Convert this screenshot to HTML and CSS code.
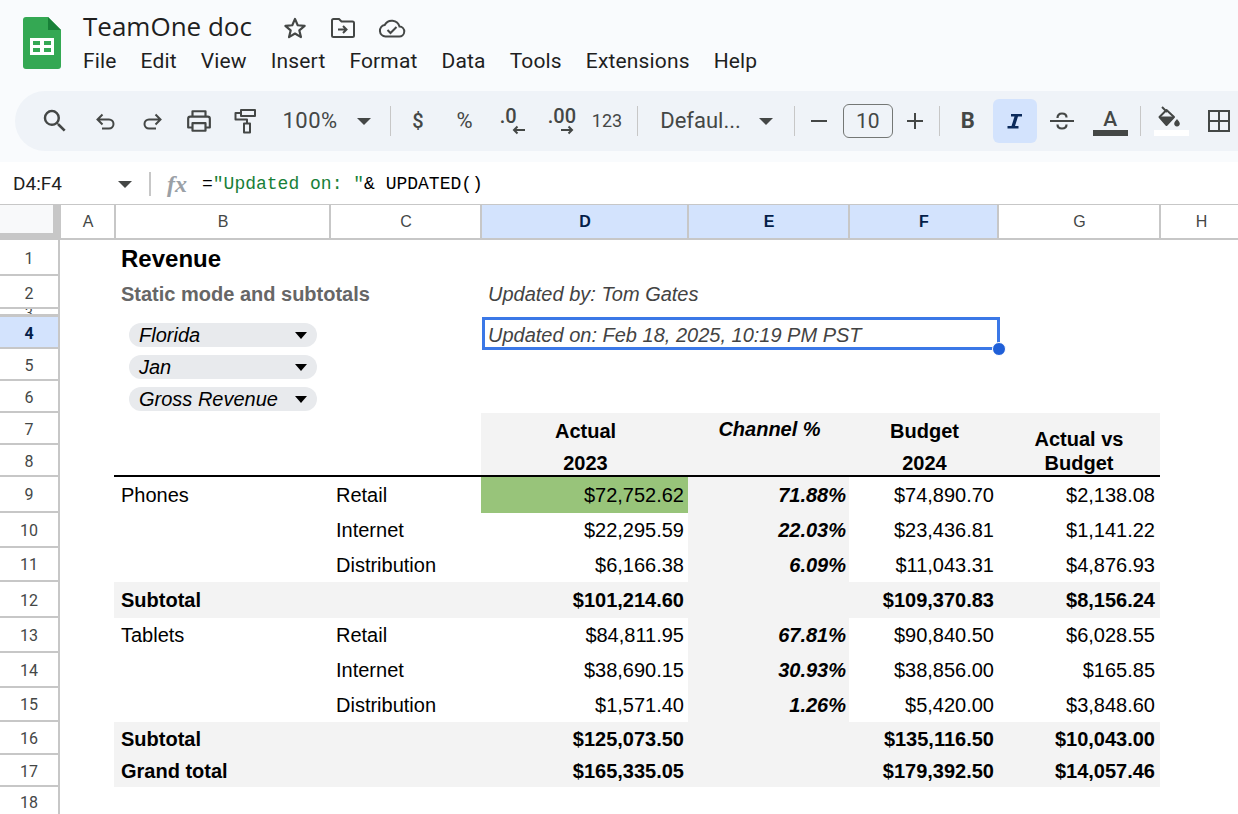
FILE: index.html
```html
<!DOCTYPE html>
<html lang="en">
<head>
<meta charset="utf-8">
<title>TeamOne doc</title>
<link rel="stylesheet" href="styles.css">
</head>
<body>
<header class="app-header">
  <svg class="logo" viewBox="0 0 38 52" width="38" height="52">
    <path d="M3 0H25L38 13V49a3 3 0 0 1-3 3H3a3 3 0 0 1-3-3V3a3 3 0 0 1 3-3z" fill="#34a853"/>
    <path d="M25 0L38 13H25z" fill="#188038"/>
    <path d="M7 21H31V38H7zM10 24V28H17V24zM21 24V28H28V24zM10 31V35H17V31zM21 31V35H28V31z" fill="#fff" fill-rule="evenodd"/>
  </svg>
  <div class="title-block">
    <div class="title-row">
      <span class="doc-title">TeamOne doc</span>
      <svg class="title-icon star" viewBox="0 0 24 24" width="26" height="26"><path d="M12 3.600l2.500 5.900 6.400.5-4.900 4.200 1.500 6.200L12 17.100l-5.500 3.300L8 14.200 3.100 10l6.400-.5z" fill="none" stroke="#444746" stroke-width="2" stroke-linejoin="round"/></svg>
      <svg class="title-icon move" viewBox="0 0 26 22" width="26" height="22"><path d="M2 3.500a1.500 1.500 0 0 1 1.500-1.500H9l2.500 2.500h11a1.500 1.500 0 0 1 1.500 1.500v12.500a1.500 1.500 0 0 1-1.500 1.500h-19A1.500 1.500 0 0 1 2 18.500z" fill="none" stroke="#444746" stroke-width="2"/><path d="M8 12.500h8M13 9l3.500 3.500L13 16" fill="none" stroke="#444746" stroke-width="2"/></svg>
      <svg class="title-icon cloud" viewBox="0 0 28 20" width="28" height="20"><path d="M7.500 18.500a5.800 5.800 0 0 1-.8-11.500A8 8 0 0 1 21.500 8.500a5 5 0 0 1-.5 10z" fill="none" stroke="#444746" stroke-width="2"/><path d="M9.500 12l3 3 6-6" fill="none" stroke="#444746" stroke-width="2"/></svg>
    </div>
    <nav class="menu">
      <span>File</span><span>Edit</span><span>View</span><span>Insert</span><span>Format</span><span>Data</span><span>Tools</span><span>Extensions</span><span>Help</span>
    </nav>
  </div>
</header>

<div class="toolbar">
  <span class="tool search"><svg viewBox="0 0 24 24" width="30" height="30"><path fill="#444746" d="M15.500 14h-.79l-.28-.27A6.471 6.471 0 0 0 16 9.500 6.500 6.500 0 1 0 9.500 16c1.610 0 3.090-.59 4.230-1.570l.27.28v.79l5 4.990L20.490 19l-4.990-5zm-6 0C7.010 14 5 11.990 5 9.500S7.010 5 9.500 5 14 7.010 14 9.500 11.990 14 9.500 14z"/></svg></span>
  <span class="tool low"><svg viewBox="0 0 20 20" width="20" height="20"><path d="M2 8.500h11a4.500 4.500 0 0 1 0 9H6M6.500 3.500L1.500 8.500l5 5" transform="translate(0 -1)" fill="none" stroke="#444746" stroke-width="2"/></svg></span>
  <span class="tool low"><svg viewBox="0 0 20 20" width="20" height="20"><path d="M18 8.500H7a4.500 4.500 0 0 0 0 9h7M13.500 3.500l5 5-5 5" transform="translate(0 -1)" fill="none" stroke="#444746" stroke-width="2"/></svg></span>
  <span class="tool"><svg viewBox="0 0 24 22" width="26" height="24"><path d="M6 7V2h12v5M6 17H2V9a2 2 0 0 1 2-2h16a2 2 0 0 1 2 2v8h-4M6 13h12v7H6z" fill="none" stroke="#444746" stroke-width="2" stroke-linejoin="round"/></svg></span>
  <span class="tool"><svg viewBox="0 0 22 26" width="22" height="26"><path d="M7 2h14v6H7zM7 5H1.500v6.500H13V15.500M10 15.500h6v9h-6z" fill="none" stroke="#444746" stroke-width="2" stroke-linejoin="round"/></svg></span>
  <span class="tool-text zoom-level">100%</span>
  <span class="caret"></span>
  <span class="sep sep-a"></span>
  <span class="tool sym dollar">$</span>
  <span class="tool sym percent">%</span>
  <span class="tool dec">
    <span class="dec-text">.0</span>
    <svg class="dec-arrow" viewBox="0 0 14 10" width="14" height="10"><path d="M13 5H2M5.500 1.500L2 5l3.500 3.500" fill="none" stroke="#444746" stroke-width="2"/></svg>
  </span>
  <span class="tool dec">
    <span class="dec-text">.00</span>
    <svg class="dec-arrow" viewBox="0 0 14 10" width="14" height="10"><path d="M1 5h11M8.500 1.500L12 5l-3.500 3.500" fill="none" stroke="#444746" stroke-width="2"/></svg>
  </span>
  <span class="tool sym num">123</span>
  <span class="sep sep-b"></span>
  <span class="tool-text font-name">Defaul...</span>
  <span class="caret caret-font"></span>
  <span class="sep sep-c"></span>
  <span class="tool minus"><svg viewBox="0 0 16 16" width="16" height="16"><path d="M0 8h16" stroke="#444746" stroke-width="2"/></svg></span>
  <span class="size-box">10</span>
  <span class="tool"><svg viewBox="0 0 16 16" width="16" height="16"><path d="M0 8h16M8 0v16" stroke="#444746" stroke-width="2"/></svg></span>
  <span class="sep sep-d"></span>
  <span class="tool sym bold">B</span>
  <span class="tool italic-on"><svg viewBox="0 0 18 18" width="18" height="18"><path d="M5 2h11v2.500h-4L9 14h3.500v2.500H1.500V14h4L8.500 4.500H5z" fill="#0b2a5b"/></svg></span>
  <span class="tool strike"><svg viewBox="0 0 26 22" width="26" height="22"><path d="M1 11h24" stroke="#444746" stroke-width="2"/><path d="M8.500 8c0-3 1.800-4.500 4.500-4.500S17.500 5 17.500 7.500M8.500 14.500c0 2.500 1.800 4 4.500 4s4.500-1.500 4.500-4" fill="none" stroke="#444746" stroke-width="2.200"/></svg></span>
  <span class="tool text-color"><span class="a-glyph">A</span><span class="bar bar-dark"></span></span>
  <span class="sep sep-e"></span>
  <span class="tool fill-color"><svg viewBox="0 0 28 22" width="28" height="22"><path d="M2.500 11L9.500 4l7.500 7-7.500 8z" fill="none" stroke="#444746" stroke-width="2" stroke-linejoin="round"/><path d="M2.500 11H17l-7.500 8z" fill="#444746" stroke="#444746" stroke-linejoin="round"/><path d="M5 1l5 5" stroke="#444746" stroke-width="2"/><path d="M20 13c1.200 1.800 2.800 3 2.800 4.600a2.800 2.800 0 0 1-5.600 0c0-1.600 1.600-2.800 2.800-4.600z" fill="#444746"/></svg><span class="bar bar-light"></span></span>
  <span class="tool borders"><svg viewBox="0 0 22 22" width="22" height="22"><path d="M1 1h20v20H1zM11 1v20M1 11h20" fill="none" stroke="#444746" stroke-width="2"/></svg></span>
</div>

<div class="formula-bar">
  <span class="name-box">D4:F4</span>
  <span class="caret caret-name"></span>
  <span class="fb-sep"></span>
  <span class="fx">fx</span>
  <span class="formula">=<span class="str">"Updated on: "</span>&amp; UPDATED()</span>
</div>

<table class="sheet">
  <colgroup>
    <col class="c-h"><col class="c-a"><col class="c-b"><col class="c-c"><col class="c-d"><col class="c-e"><col class="c-f"><col class="c-g"><col class="c-x">
  </colgroup>
  <tr class="hdr">
    <th class="corner"></th><th>A</th><th>B</th><th>C</th><th class="sel">D</th><th class="sel">E</th><th class="sel">F</th><th>G</th><th class="col-h">H</th>
  </tr>
  <tr class="r1"><th class="rh">1</th><td></td><td class="title" colspan="2">Revenue</td><td colspan="5"></td></tr>
  <tr class="r2"><th class="rh">2</th><td></td><td class="sub" colspan="2">Static mode and subtotals</td><td class="note" colspan="5">Updated by: Tom Gates</td></tr>
  <tr class="r3"><th class="rh thin"><span class="clip">3</span></th><td colspan="8"></td></tr>
  <tr class="r4"><th class="rh rsel">4</th><td></td><td><span class="chip">Florida</span></td><td></td>
    <td class="note rel" colspan="3">Updated on: Feb 18, 2025, 10:19 PM PST<span class="selection"><i class="handle"></i></span></td><td colspan="2"></td></tr>
  <tr class="r5"><th class="rh">5</th><td></td><td><span class="chip">Jan</span></td><td colspan="6"></td></tr>
  <tr class="r6"><th class="rh">6</th><td></td><td><span class="chip">Gross Revenue</span></td><td colspan="6"></td></tr>
  <tr class="r7"><th class="rh">7</th><td colspan="3"></td><td class="g hd">Actual</td><td class="g hd ch">Channel %</td><td class="g hd">Budget</td><td class="g hd wrap" rowspan="2">Actual vs<br>Budget</td><td></td></tr>
  <tr class="r8"><th class="rh">8</th><td></td><td class="rule rule-start" colspan="2"></td><td class="g hd rule">2023</td><td class="g rule"></td><td class="g hd rule">2024</td><td></td></tr>
  <tr class="r9"><th class="rh">9</th><td></td><td class="t">Phones</td><td class="t">Retail</td><td class="n green">$72,752.62</td><td class="n pct">71.88%</td><td class="n">$74,890.70</td><td class="n">$2,138.08</td><td></td></tr>
  <tr class="r10"><th class="rh">10</th><td></td><td></td><td class="t">Internet</td><td class="n">$22,295.59</td><td class="n pct">22.03%</td><td class="n">$23,436.81</td><td class="n">$1,141.22</td><td></td></tr>
  <tr class="r11"><th class="rh">11</th><td></td><td></td><td class="t">Distribution</td><td class="n">$6,166.38</td><td class="n pct">6.09%</td><td class="n">$11,043.31</td><td class="n">$4,876.93</td><td></td></tr>
  <tr class="r12"><th class="rh">12</th><td></td><td class="t total total-start" colspan="2">Subtotal</td><td class="n total">$101,214.60</td><td class="total"></td><td class="n total">$109,370.83</td><td class="n total">$8,156.24</td><td></td></tr>
  <tr class="r13"><th class="rh">13</th><td></td><td class="t">Tablets</td><td class="t">Retail</td><td class="n">$84,811.95</td><td class="n pct">67.81%</td><td class="n">$90,840.50</td><td class="n">$6,028.55</td><td></td></tr>
  <tr class="r14"><th class="rh">14</th><td></td><td></td><td class="t">Internet</td><td class="n">$38,690.15</td><td class="n pct">30.93%</td><td class="n">$38,856.00</td><td class="n">$165.85</td><td></td></tr>
  <tr class="r15"><th class="rh">15</th><td></td><td></td><td class="t">Distribution</td><td class="n">$1,571.40</td><td class="n pct">1.26%</td><td class="n">$5,420.00</td><td class="n">$3,848.60</td><td></td></tr>
  <tr class="r16"><th class="rh">16</th><td></td><td class="t total total-start" colspan="2">Subtotal</td><td class="n total">$125,073.50</td><td class="total"></td><td class="n total">$135,116.50</td><td class="n total">$10,043.00</td><td></td></tr>
  <tr class="r17"><th class="rh">17</th><td></td><td class="t total total-start" colspan="2">Grand total</td><td class="n total">$165,335.05</td><td class="total"></td><td class="n total">$179,392.50</td><td class="n total">$14,057.46</td><td></td></tr>
  <tr class="r18"><th class="rh">18</th><td colspan="8"></td></tr>
</table>
</body>
</html>
```

FILE: styles.css
```css
* { box-sizing: border-box; }
html, body { margin: 0; height: 100%; overflow: hidden; }
body { background: #f9fbfd; font-family: "Liberation Sans", Arial, sans-serif; color: #000; width: 1238px; height: 814px; }

/* App header */
.app-header { display: flex; height: 91px; padding: 17px 0 0 23px; }
.logo { flex: none; }
.title-block { margin-left: 22px; margin-top: -8px; }
.title-row { display: flex; align-items: center; height: 34px; }
.doc-title { font: 400 26px/34px "Open Sans", sans-serif; color: #1f1f1f; width: 198px; }
.title-icon { flex: none; margin-top: 3px; }
.star { margin-left: 1px; }
.move { margin-left: 22px; }
.cloud { margin-left: 22px; }
.menu { display: flex; gap: 24px; font: 400 21px/30px Roboto, sans-serif; letter-spacing: 0.15px; color: #1f1f1f; margin-top: 3px; }

/* Toolbar */
.toolbar { display: flex; align-items: center; height: 60px; margin-left: 15px; width: 1223px; overflow: hidden; background: #eff3f8; border-radius: 30px 0 0 30px; padding-left: 17px; color: #444746; }
.tool { flex: none; display: flex; align-items: center; justify-content: center; width: 46.500px; height: 44px; }
.low { padding-top: 2px; }
.search { margin-right: 4px; }
.tool-text { font: 400 22px/30px Roboto, sans-serif; color: #444746; }
.zoom-level { margin-left: 14px; width: 56px; letter-spacing: 0.5px; }
.caret { flex: none; width: 0; height: 0; border-left: 7px solid transparent; border-right: 7px solid transparent; border-top: 7px solid #444746; margin-left: 19px; }
.sep { flex: none; width: 1px; height: 30px; background: #c7c7c7; }
.sep-a { margin-left: 19px; margin-right: 4px; }
.sym { font: 500 20px/30px Roboto, sans-serif; }
.percent { font-size: 22px; font-weight: 400; }
.dec { width: 48px; flex-direction: column; align-items: flex-start; padding-left: 12px; }
.dec-text { font: 500 20px/20px Roboto, sans-serif; color: #444746; height: 20px; margin-top: -2px; }
.dec-arrow { flex: none; margin-top: -1px; margin-left: 12px; }
.num { font-size: 18px; font-weight: 400; }
.sep-b { margin-left: 7px; margin-right: 22px; }
.font-name { width: 80px; }
.caret-font { margin-left: 19px; }
.sep-c { margin-left: 21px; margin-right: 1px; }
.minus { margin-right: -1px; }
.size-box { flex: none; width: 50px; height: 34px; border: 1px solid #747775; border-radius: 6px; text-align: center; font: 400 21px/32px Roboto, sans-serif; margin: 0 -1px 0 1px; }
.sep-d { margin-left: 1px; margin-right: 4px; }
.tool.bold { width: 47px; font: 700 22px/30px Roboto, sans-serif; }
.italic-on { width: 44px; background: #d3e3fd; border-radius: 6px; margin-left: 2px; }
.strike { width: 50px; }
.text-color { width: 46px; }
.text-color, .fill-color { flex-direction: column; }
.a-glyph { font: 500 21px/26px Roboto, sans-serif; height: 22px; }
.bar { display: block; width: 35px; height: 6px; margin-top: 2px; }
.bar-dark { background: #444746; }
.bar-light { background: #fff; }
.sep-e { margin-left: 7px; margin-right: 7px; }
.borders { margin-left: 1px; }

/* Formula bar */
.formula-bar { display: flex; align-items: center; height: 43px; margin-top: 11px; background: #fff; padding: 2px 0 0 13px; border-bottom: 1px solid #c7c7c7; }
.name-box { width: 105px; font: 400 19px/24px Roboto, sans-serif; color: #1f1f1f; }
.caret-name { margin-left: 0; }
.fb-sep { width: 2px; height: 24px; background: #c7c7c7; margin-left: 17px; }
.fx { font: italic 700 24px/24px "Liberation Serif", serif; color: #9aa0a6; margin-left: 16px; width: 35px; }
.formula { font: 400 18px/24px "Liberation Mono", monospace; color: #000; }
.str { color: #188038; }

/* Sheet */
.sheet { border-collapse: separate; border-spacing: 0; table-layout: fixed; width: 1238px; background: #fff; }
.c-h { width: 60px; } .c-a { width: 55px; } .c-b { width: 215px; } .c-c { width: 151px; }
.c-d { width: 207px; } .c-e { width: 161px; } .c-f { width: 149px; } .c-g { width: 162px; } .c-x { width: 78px; }
.sheet td, .sheet th { padding: 0; overflow: hidden; white-space: nowrap; }
.sheet td { font-size: 20px; }

.hdr { height: 35px; }
.hdr th { font: 400 16px/20px "Liberation Sans", sans-serif; color: #444746; border-left: 1px solid #c7c7c7; box-shadow: -1px 0 0 #c7c7c7; border-bottom: 2px solid #c7c7c7; background: #fff; padding-top: 1px; }
.hdr .corner { background: #f8f9fa; border-left: 0; box-shadow: none; border-right: 7px solid #c7c7c7; border-bottom: 7px solid #c7c7c7; }
.hdr .sel { background: #d3e3fd; color: #041e49; font-weight: 700; }
.hdr .col-h { padding-left: 4px; }

.sheet .rh { font: 400 16px/20px Roboto, sans-serif; color: #444746; border-right: 2px solid #c7c7c7; border-bottom: 2px solid #c7c7c7; background: #fff; padding-top: 2px; }
.sheet .rsel { background: #d3e3fd; color: #041e49; font-weight: 700; }
.sheet .thin { border-bottom-width: 3px; padding-top: 0; }
.clip { display: block; height: 5px; overflow: hidden; line-height: 8px; font-size: 14px; }

.r1 { height: 36px; } .r2 { height: 33px; } .r3 { height: 8px; } .r4 { height: 32px; } .r5, .r6, .r7, .r8 { height: 32px; }
.r9 { height: 36px; } .r10 { height: 35px; } .r11 { height: 34px; } .r12 { height: 36px; } .r13 { height: 35px; } .r14 { height: 35px; } .r15 { height: 34px; } .r16 { height: 33px; } .r17 { height: 32px; } .r18 { height: 32px; }

.r1 td { padding-top: 2px; }
.r2 td, .r4 td, .r5 td, .r6 td, .r7 td, .r8 td { padding-top: 4px; }
.r16 td { padding-top: 2px; }
.sheet .r1 .rh, .sheet .r2 .rh, .sheet .r4 .rh, .sheet .r5 .rh, .sheet .r6 .rh, .sheet .r7 .rh, .sheet .r8 .rh, .sheet .r12 .rh, .sheet .r17 .rh { padding-top: 4px; }

.sheet .title { font-size: 24px; font-weight: 700; padding-left: 6px; }
.sheet .sub { font-weight: 700; color: #666; padding-left: 6px; }
.sheet .note { font-style: italic; color: #434343; padding-left: 7px; }
.sheet .rel { position: relative; overflow: visible; }
.selection { position: absolute; left: 1px; top: 0; width: 518px; height: 33px; border: 3px solid #3b78e7; }
.handle { position: absolute; right: -9px; bottom: -9px; width: 14px; height: 14px; border-radius: 50%; background: #1f5fd8; border: 1px solid #fff; }
.chip { display: flex; align-items: center; justify-content: space-between; height: 24px; width: 188px; margin-left: 14px; padding: 0 10px; border-radius: 12px; background: #e8eaed; font-style: italic; font-size: 20px; }
.chip::after { content: ""; width: 0; height: 0; border-left: 6.500px solid transparent; border-right: 6.500px solid transparent; border-top: 7px solid #000; }

.g { background: #f3f3f3; }
.sheet .hd { font-weight: 700; text-align: center; padding-left: 2px; }
.sheet .ch { font-style: italic; vertical-align: top; line-height: 30px; padding-top: 1px; }
.sheet .wrap { vertical-align: bottom; line-height: 24px; border-bottom: 2px solid #000; padding: 0; }
.sheet .rule { border-bottom: 2px solid #000; }
.sheet .rule.hd { padding-top: 6px; }
.sheet .rule-start { position: relative; overflow: visible; }
.rule-start::before { content: ""; position: absolute; left: -1px; bottom: -2px; width: 1px; height: 2px; background: #000; }
.sheet .t { padding-left: 6px; }
.sheet .n { text-align: right; padding-right: 4px; }
.sheet .n:nth-last-child(2) { padding-right: 5px; }
.sheet .pct { background: #f3f3f3; font-weight: 700; font-style: italic; padding-right: 3px; }
.sheet .total { background: #f3f3f3; font-weight: 700; }
.sheet .total-start { box-shadow: -1px 0 0 #f3f3f3; overflow: visible; }
.sheet .green { background: #98c47a; }
```
